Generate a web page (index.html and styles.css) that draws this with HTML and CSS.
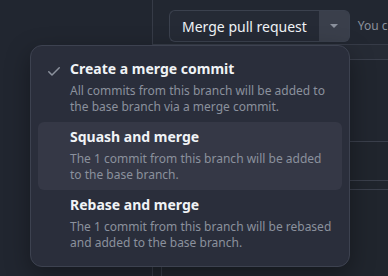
FILE: index.html
```html
<!DOCTYPE html>
<html lang="en">
<head>
  <meta charset="UTF-8" />
  <title>Merge pull request</title>
  <link rel="stylesheet" href="styles.css">
</head>
<body>

<div class="page">
  <aside class="side"></aside>

  <main class="main">
    <div class="merge-bar">
      <div class="btn-group">
        <button class="btn-merge">Merge pull request</button>
        <button class="btn-caret"><span class="caret"></span></button>
      </div>
      <span class="hint">You c</span>
    </div>
    <div class="strip"></div>
    <div class="timeline">
      <div class="row row-tall"></div>
      <div class="row row-mid"></div>
      <div class="row row-thin"></div>
    </div>
  </main>
</div>

<!-- Меню выбора способа слияния -->
<div class="merge-menu">
  <div class="merge-item">
    <svg class="check" width="16" height="16" viewBox="0 0 16 16"><path fill="currentColor" d="M13.78 4.22a.75.75 0 0 1 0 1.06l-7.25 7.25a.75.75 0 0 1-1.06 0L2.22 9.28a.751.751 0 0 1 .018-1.042.751.751 0 0 1 1.042-.018L6 10.94l6.72-6.72a.75.75 0 0 1 1.06 0Z"/></svg>
    <div class="item-text">
      <div class="item-title">Create a merge commit</div>
      <div class="item-desc">All commits from this branch will be added to the base branch via a merge commit.</div>
    </div>
  </div>
  <div class="merge-item active">
    <span class="check"></span>
    <div class="item-text">
      <div class="item-title">Squash and merge</div>
      <div class="item-desc">The 1 commit from this branch will be added to the base branch.</div>
    </div>
  </div>
  <div class="merge-item">
    <span class="check"></span>
    <div class="item-text">
      <div class="item-title">Rebase and merge</div>
      <div class="item-desc">The 1 commit from this branch will be rebased and added to the base branch.</div>
    </div>
  </div>
</div>

</body>
</html>
```

FILE: styles.css
```css
* {
  margin: 0;
  padding: 0;
  box-sizing: border-box;
  font-family: 'Noto Sans', sans-serif;
}

body {
  background-color: #212630;
  color: #f0f3f6;
  overflow: hidden;
  width: 388px;
  height: 276px;
  position: relative;
}

.page {
  display: flex;
  height: 276px;
}

.side {
  width: 152px;
  flex-shrink: 0;
  background: #212630;
}

.main {
  flex-grow: 1;
  border-left: 1px solid #363b47;
  background: #20252d;
  min-width: 0;
}

.merge-bar {
  height: 45px;
  padding: 10px 0 0 16px;
  display: flex;
  align-items: flex-start;
  gap: 8px;
  background: #222731;
  border-bottom: 1px solid #363b47;
  white-space: nowrap;
  overflow: hidden;
}

.btn-group {
  display: flex;
  flex-shrink: 0;
}

.btn-merge {
  height: 32px;
  padding: 0 12px;
  background: #252a35;
  color: #f0f3f6;
  border: 1px solid #3b414e;
  border-right: none;
  border-radius: 6px 0 0 6px;
  font-size: 14px;
  font-family: 'Noto Sans', sans-serif;
}

.btn-caret {
  width: 31px;
  height: 32px;
  background: #3a3f4b;
  border: 1px solid #3b414e;
  border-left: none;
  border-radius: 0 6px 6px 0;
  display: flex;
  align-items: center;
  justify-content: center;
}

.caret {
  width: 0;
  height: 0;
  border-left: 4px solid transparent;
  border-right: 4px solid transparent;
  border-top: 4px solid #8b919d;
}

.hint {
  font-size: 12px;
  line-height: 32px;
  color: #8b919d;
}

.strip {
  height: 15px;
  background: #262b35;
  border-bottom: 1px solid #3a3f4b;
}

.timeline {
  margin-left: 8px;
  border-left: 1px solid #363b47;
  height: 217px;
}

.row {
  border-bottom: 1px solid #3a3f4b;
}

.row-tall {
  height: 82px;
  background: #21262f;
}

.row-mid {
  height: 39px;
  background: #20252d;
}

.row-thin {
  height: 9px;
  background: #20252d;
}

.merge-menu {
  position: absolute;
  left: 30px;
  top: 45px;
  width: 320px;
  padding: 8px 7px;
  background: #2a2e3b;
  border: 1px solid #3d4250;
  border-radius: 12px;
  box-shadow: 0 8px 24px rgba(0, 0, 0, 0.35);
}

.merge-item {
  display: flex;
  gap: 8px;
  height: 68px;
  padding: 5px 8px 0;
  border-radius: 6px;
}

.merge-item.active {
  background: #353846;
}

.check {
  width: 16px;
  height: 16px;
  flex-shrink: 0;
  margin-top: 4px;
  color: #8b919d;
}

.item-title {
  font-size: 14px;
  font-weight: 700;
  line-height: 20px;
  color: #f0f3f6;
}

.item-desc {
  margin-top: 4px;
  font-size: 12px;
  line-height: 16px;
  color: #8b919d;
}
```
